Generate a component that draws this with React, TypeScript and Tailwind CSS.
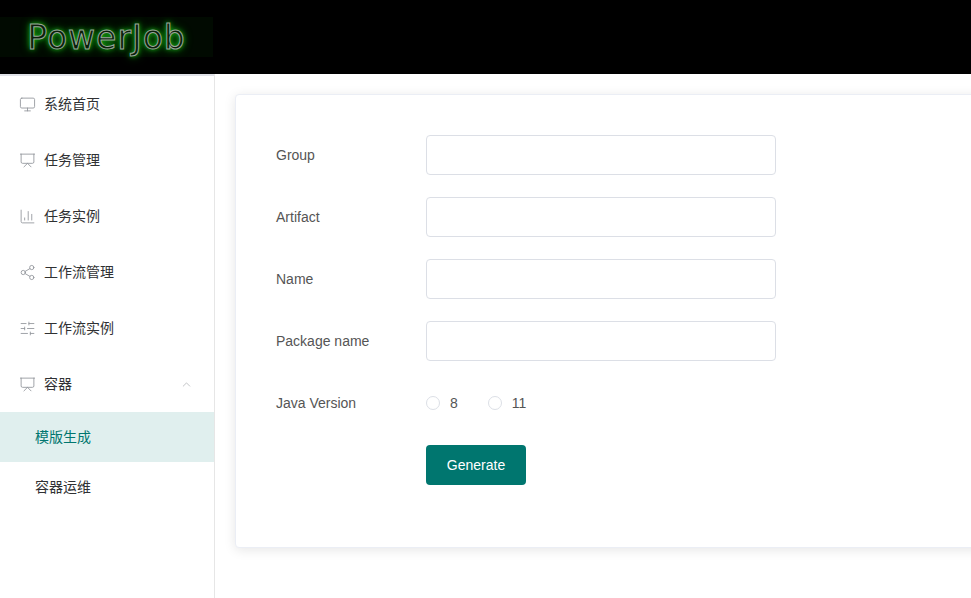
import { BarChart3, ChevronUp, Monitor, Presentation, Share2, SlidersHorizontal } from "lucide-react";

const sans = "font-['Liberation_Sans','Noto_Sans_CJK_SC',sans-serif]";

const menu = [
  { icon: Monitor, label: "系统首页" },
  { icon: Presentation, label: "任务管理" },
  { icon: BarChart3, label: "任务实例" },
  { icon: Share2, label: "工作流管理" },
  { icon: SlidersHorizontal, label: "工作流实例" },
];

const fields = ["Group", "Artifact", "Name", "Package name"];

function Radio({ label }: { label: string }) {
  return (
    <label className="flex items-center gap-[10px]">
      <span className="h-[14px] w-[14px] rounded-full border border-[#dcdfe6] bg-white" />
      <span>{label}</span>
    </label>
  );
}

export default function App() {
  return (
    <div className={`${sans} flex h-[598px] w-[971px] flex-col overflow-hidden bg-white text-[14px] text-[#555]`}>
      <header className="flex h-[74px] shrink-0 items-center bg-black">
        <div className="flex h-[40px] w-[213px] items-center justify-center bg-[#010a01]">
          <span className="font-['DejaVu_Sans',sans-serif] text-[33px] leading-none tracking-[1px] text-[#0a1f0a] [-webkit-text-stroke:1px_#9aa59a] [text-shadow:0_0_5px_#18d018,0_0_10px_#0f9a0f]">
            PowerJob
          </span>
        </div>
      </header>

      <div className="flex min-h-0 flex-1">
        <aside className="w-[215px] shrink-0 border-r border-[#e6e6e6]">
          <div className="h-[2px] w-[214px] bg-[#e0e2e8]" />
          <nav className="text-[#303133]">
            {menu.map((item) => (
              <div key={item.label} className="flex h-[56px] items-center pl-[19px]">
                <item.icon size={17} strokeWidth={1.2} className="mr-[8px] text-[#909399]" />
                <span>{item.label}</span>
              </div>
            ))}
            <div className="flex h-[56px] items-center pl-[19px] pr-[21px]">
              <Presentation size={17} strokeWidth={1.2} className="mr-[8px] text-[#909399]" />
              <span>容器</span>
              <ChevronUp size={13} strokeWidth={1} className="ml-auto text-[#909399]" />
            </div>
            <div className="flex h-[50px] items-center bg-[#e0efee] pl-[35px] text-[#00766f]">模版生成</div>
            <div className="flex h-[50px] items-center pl-[35px]">容器运维</div>
          </nav>
        </aside>

        <main className="min-w-0 flex-1 pl-[20px] pt-[20px]">
          <div className="h-[454px] w-[800px] rounded-[4px] border border-[#ebeef5] bg-white pl-[40px] pt-[40px] shadow-[0_2px_12px_0_rgba(0,0,0,0.1)]">
            {fields.map((field) => (
              <div key={field} className="mb-[22px] flex h-[40px] items-center">
                <span className="w-[150px]">{field}</span>
                <input className="h-[40px] w-[350px] rounded-[4px] border border-[#dcdfe6] bg-white outline-none" />
              </div>
            ))}
            <div className="mb-[22px] flex h-[40px] items-center">
              <span className="w-[150px]">Java Version</span>
              <div className="flex items-center gap-[30px]">
                <Radio label="8" />
                <Radio label="11" />
              </div>
            </div>
            <div className="pl-[150px]">
              <button className="h-[40px] w-[100px] rounded-[4px] bg-[#00766f] text-white">Generate</button>
            </div>
          </div>
        </main>
      </div>
    </div>
  );
}
